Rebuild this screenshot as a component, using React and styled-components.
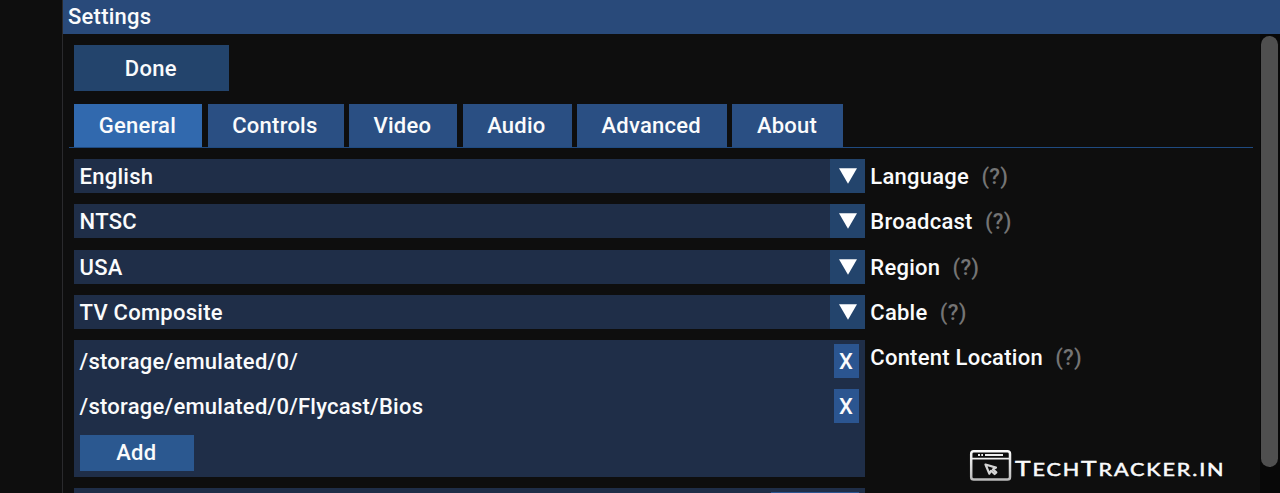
import React from "react";
import styled, { createGlobalStyle } from "styled-components";

const GlobalStyle = createGlobalStyle`
  * { box-sizing: border-box; }
  body { margin: 0; background: #0e0e0e; overflow: hidden; }
`;

const Screen = styled.div`
  position: relative;
  width: 1280px;
  height: 493px;
  padding-left: 62px;
  overflow: hidden;
  background: #0e0e0e;
  color: #fafbfc;
  font: 500 22px/34px Roboto, "Liberation Sans", sans-serif;
  letter-spacing: 0.25px;
`;

const Window = styled.main`
  height: 493px;
  border-left: 1px solid #2a2a2d;
`;

const TitleBar = styled.header`
  height: 33.5px;
  padding-left: 5px;
  background: #294a7a;
`;

const Body = styled.div`
  display: flex;
  justify-content: space-between;
`;

const Content = styled.div`
  width: 1190px;
  padding: 11.5px 0 0 6px;
`;

const DoneButton = styled.button`
  display: block;
  width: 154.6px;
  height: 46px;
  margin-left: 5px;
  padding: 1px 1px 0 0;
  border: 0;
  background: #23446c;
  color: inherit;
  font: inherit;
  letter-spacing: inherit;
`;

const Tabs = styled.nav`
  display: flex;
  gap: 5.4px;
  height: 43px;
  margin-top: 13px;
  padding-left: 5px;
`;

const TabRule = styled.div`
  height: 1px;
  background: #1f4a80;
`;

const Tab = styled.button`
  flex: none;
  width: ${(p) => p.$width}px;
  height: 43px;
  padding: 0 1.6px 0 0;
  border: 0;
  background: ${(p) => (p.$active ? "#3169ae" : "#2a4f83")};
  color: inherit;
  font: inherit;
  letter-spacing: inherit;
`;

const Options = styled.div`
  display: flex;
  flex-direction: column;
  gap: 11.22px;
  margin-top: 11.1px;
  padding-left: 5px;
  line-height: 35px;
`;

const OptionRow = styled.div`
  display: flex;
  align-items: flex-start;
  gap: 5.6px;
  height: ${(p) => p.$height || 34}px;
`;

const Select = styled.div`
  display: flex;
  justify-content: space-between;
  width: 790.7px;
  height: 34px;
  padding-left: 5.6px;
  background: #1f2e48;
`;

const ArrowCell = styled.span`
  display: flex;
  align-items: center;
  justify-content: center;
  width: 34.3px;
  background: #23446c;
`;

const Label = styled.span`
  white-space: nowrap;
`;

const Hint = styled.span`
  margin-left: 12.3px;
  color: #747474;
`;

const PathList = styled.div`
  width: 790.7px;
  height: 136.6px;
  padding: 4px 5.5px 0 5.6px;
  background: #1f2e48;
`;

const PathRow = styled.div`
  display: flex;
  justify-content: space-between;
  height: 34px;
  margin-bottom: 11.3px;
`;

const RemoveButton = styled.button`
  width: 25.5px;
  padding: 0 1px 0 0;
  border: 0;
  background: #2b5590;
  color: inherit;
  font: inherit;
`;

const AddButton = styled.button`
  display: block;
  width: 114.5px;
  height: 36px;
  padding: 0 1px 0 0;
  border: 0;
  background: #2b5890;
  color: inherit;
  font: inherit;
  letter-spacing: inherit;
`;

const NextPanel = styled.div`
  display: flex;
  justify-content: flex-end;
  width: 790.7px;
  height: 40px;
  padding: 4px 5.5px 0;
  background: #1f2e48;
`;

const NextButton = styled.div`
  width: 88px;
  background: #2b5590;
`;

const ScrollTrack = styled.div`
  width: 20px;
  height: 460px;
  padding: 2.5px 0 0 0.5px;
  background: #080808;
`;

const ScrollThumb = styled.div`
  width: 17.3px;
  height: 431px;
  border-radius: 9px;
  background: #4f4f4f;
`;

const Watermark = styled.div`
  position: absolute;
  left: 969px;
  top: 449px;
  display: flex;
  gap: 3px;
`;

const Brand = styled.span`
  display: block;
  font: 400 18px/30px Lato, sans-serif;
  letter-spacing: 1.55px;
  -webkit-text-stroke: 0.5px #fafbfc;
  white-space: nowrap;
  transform: scaleX(1.2);
  transform-origin: left;
  margin-top: 4px;
`;

const BrandCap = styled.span`
  font-size: 22px;
`;

const tabs = [
  ["General", 128.3],
  ["Controls", 136],
  ["Video", 108.2],
  ["Audio", 109],
  ["Advanced", 149.9],
  ["About", 111],
];

const options = [
  ["English", "Language"],
  ["NTSC", "Broadcast"],
  ["USA", "Region"],
  ["TV Composite", "Cable"],
];

const paths = ["/storage/emulated/0/", "/storage/emulated/0/Flycast/Bios"];

function BrowserLogo() {
  return (
    <svg width="43" height="32" viewBox="0 0 43 32" fill="none">
      <defs>
        <linearGradient id="metal" x1="0" y1="0" x2="0" y2="32" gradientUnits="userSpaceOnUse">
          <stop stopColor="#fff" />
          <stop offset="1" stopColor="#b8b8b8" />
        </linearGradient>
      </defs>
      <rect x="2.2" y="2.2" width="38.8" height="28.3" rx="2.6" stroke="url(#metal)" strokeWidth="2.5" />
      <path d="M2 9.7H41" stroke="#eee" strokeWidth="1.8" />
      <path d="M9 6H11M12.3 6H14M16 6H34" stroke="#eee" strokeWidth="2" />
      <path
        d="M16.5 15.5L27 18.6L23.9 20.4L27.3 23.4L25.6 25L22 21.8L20.3 24.7Z"
        stroke="#d5d5d5"
        strokeWidth="2.2"
        strokeLinejoin="round"
      />
    </svg>
  );
}

export default function App() {
  return (
    <Screen>
      <GlobalStyle />
      <Window>
        <TitleBar>Settings</TitleBar>
        <Body>
          <Content>
            <DoneButton>Done</DoneButton>
            <Tabs>
              {tabs.map(([name, width], i) => (
                <Tab key={name} $width={width} $active={i === 0}>{name}</Tab>
              ))}
            </Tabs>
            <TabRule />
            <Options>
              {options.map(([value, label]) => (
                <OptionRow key={label}>
                  <Select>
                    {value}
                    <ArrowCell>
                      <svg width="18" height="16" viewBox="0 0 18 16">
                        <path d="M0 0.2H18L9 15.8Z" fill="#fff" />
                      </svg>
                    </ArrowCell>
                  </Select>
                  <Label>{label}<Hint>(?)</Hint></Label>
                </OptionRow>
              ))}
              <OptionRow $height={136.6}>
                <PathList>
                  {paths.map((path) => (
                    <PathRow key={path}>
                      {path}
                      <RemoveButton>X</RemoveButton>
                    </PathRow>
                  ))}
                  <AddButton>Add</AddButton>
                </PathList>
                <Label>Content Location<Hint>(?)</Hint></Label>
              </OptionRow>
              <NextPanel><NextButton /></NextPanel>
            </Options>
          </Content>
          <ScrollTrack><ScrollThumb /></ScrollTrack>
        </Body>
      </Window>
      <Watermark>
        <BrowserLogo />
        <Brand>
          <BrandCap>T</BrandCap>ECH<BrandCap>T</BrandCap>RACKER.IN
        </Brand>
      </Watermark>
    </Screen>
  );
}
